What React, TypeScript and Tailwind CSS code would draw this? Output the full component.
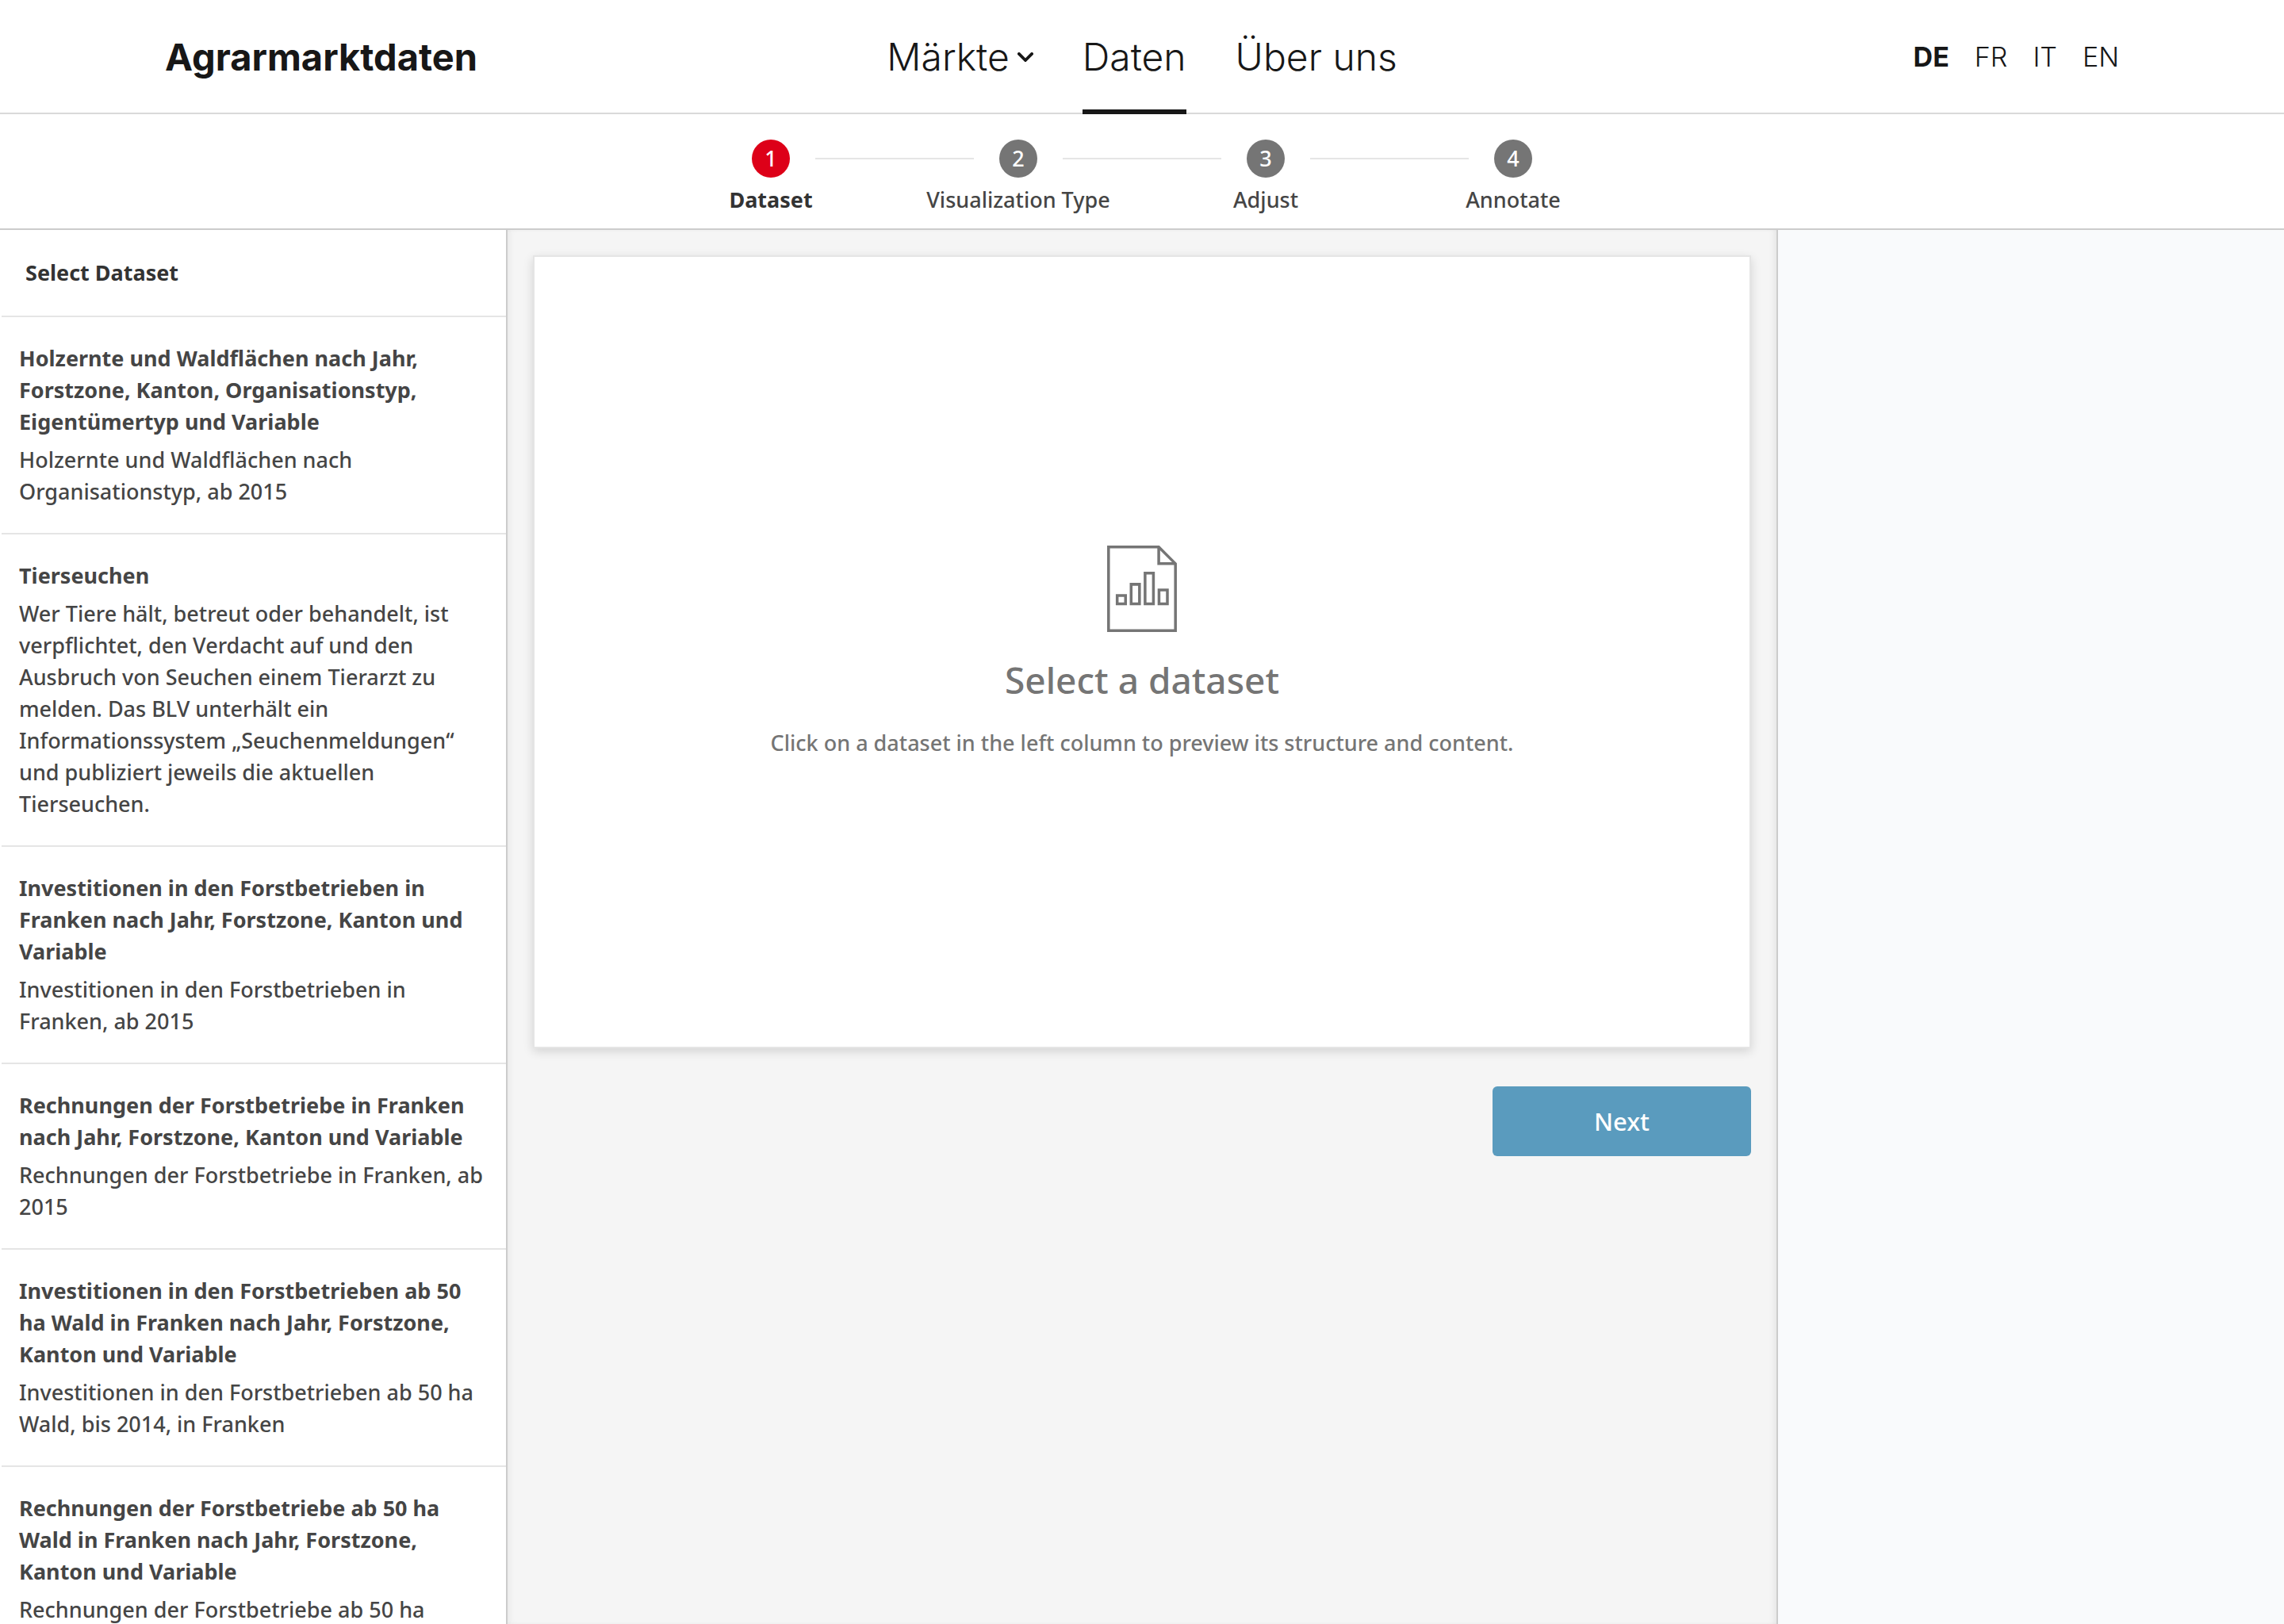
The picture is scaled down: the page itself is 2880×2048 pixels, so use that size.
type Dataset = { title: string; description: string };

const datasets: Dataset[] = [
  {
    title: "Holzernte und Waldflächen nach Jahr, Forstzone, Kanton, Organisationstyp, Eigentümertyp und Variable",
    description: "Holzernte und Waldflächen nach Organisationstyp, ab 2015",
  },
  {
    title: "Tierseuchen",
    description:
      "Wer Tiere hält, betreut oder behandelt, ist verpflichtet, den Verdacht auf und den Ausbruch von Seuchen einem Tierarzt zu melden. Das BLV unterhält ein Informationssystem „Seuchenmeldungen“ und publiziert jeweils die aktuellen Tierseuchen.",
  },
  {
    title: "Investitionen in den Forstbetrieben in Franken nach Jahr, Forstzone, Kanton und Variable",
    description: "Investitionen in den Forstbetrieben in Franken, ab 2015",
  },
  {
    title: "Rechnungen der Forstbetriebe in Franken nach Jahr, Forstzone, Kanton und Variable",
    description: "Rechnungen der Forstbetriebe in Franken, ab 2015",
  },
  {
    title: "Investitionen in den Forstbetrieben ab 50 ha Wald in Franken nach Jahr, Forstzone, Kanton und Variable",
    description: "Investitionen in den Forstbetrieben ab 50 ha Wald, bis 2014, in Franken",
  },
  {
    title: "Rechnungen der Forstbetriebe ab 50 ha Wald in Franken nach Jahr, Forstzone, Kanton und Variable",
    description: "Rechnungen der Forstbetriebe ab 50 ha",
  },
];

const steps = ["Dataset", "Visualization Type", "Adjust", "Annotate"];
const languages = ["DE", "FR", "IT", "EN"];

function ChevronIcon() {
  return (
    <svg viewBox="0 0 20 12" className="h-3 w-5" fill="none" stroke="currentColor" strokeWidth="3.8" aria-hidden="true">
      <path d="M1.9 1.9 10 10l8.100-8.100" strokeLinecap="round" strokeLinejoin="miter" />
    </svg>
  );
}

function ChartDocumentIcon() {
  return (
    <svg viewBox="0 0 25 31" className="h-[109px] w-[88px]" fill="none" stroke="currentColor" strokeWidth="1" aria-hidden="true">
      <path d="M.5.5h18l6 6v24H.5z" />
      <path d="M18.5.5v6h6" />
      <path d="M3.600 17.900h3v3h-3zM8.600 13.900h3v7h-3zM13.600 9.900h3v11h-3zM18.600 15.900h3v5h-3z" />
    </svg>
  );
}

function Header() {
  return (
    <header className="grid h-36 shrink-0 grid-cols-[1fr_auto_1fr] items-center px-52 font-['Inter',sans-serif] text-[#171717] shadow-[inset_0_-2px_0_#d9d9d9]">
      <a href="#home" className="text-[47px] font-bold">Agrarmarktdaten</a>
      <nav className="flex h-full items-stretch gap-[62px] text-5xl font-light" aria-label="Main">
        <button type="button" className="flex items-center gap-2.5">
          Märkte
          <ChevronIcon />
        </button>
        <a href="#daten" aria-current="page" className="flex items-center border-y-6 border-t-transparent border-b-[#171717]">Daten</a>
        <a href="#about" className="flex items-center">Über uns</a>
      </nav>
      <nav className="flex justify-end gap-8 text-[34px] font-light" aria-label="Language">
        {languages.map((l) => (
          <a key={l} href={`#${l}`} className="first:font-bold">{l}</a>
        ))}
      </nav>
    </header>
  );
}

function Stepper() {
  return (
    <div className="flex shrink-0 justify-center border-b-2 border-[#cccccc] pt-8 pb-4">
      <ol className="grid w-full max-w-[1248px] grid-cols-4">
        {steps.map((label, i) => (
          <li key={label} className="group text-center">
            <div className="flex items-center gap-8">
              <span className="h-0.5 flex-1 bg-[#e5e5e5] group-first:invisible" />
              <span className="flex size-12 items-center justify-center rounded-full bg-[#757575] text-white group-first:bg-[#dd0018]">{i + 1}</span>
              <span className="h-0.5 flex-1 bg-[#e5e5e5] group-last:invisible" />
            </div>
            <div className="mt-2 group-first:font-bold group-first:text-[#333333]">{label}</div>
          </li>
        ))}
      </ol>
    </div>
  );
}

export default function App() {
  return (
    <div className="flex h-screen flex-col overflow-hidden bg-white font-['Noto_Sans',sans-serif] text-[27px] leading-10 font-medium text-[#454545]">
      <Header />
      <Stepper />
      <div className="grid min-h-0 flex-1 grid-cols-[640px_1fr_640px]">
        <aside className="overflow-hidden border-r-2 border-[#cccccc] pl-0.5">
          <h2 className="border-b-2 border-[#e5e5e5] px-[30px] py-[34px] font-bold text-[#333333]">Select Dataset</h2>
          <ul>
            {datasets.map((d) => (
              <li key={d.title} className="border-b-2 border-[#e5e5e5]">
                <button type="button" className="block w-full px-[22px] py-8 text-left">
                  <span className="block font-bold">{d.title}</span>
                  <span className="mt-2 block">{d.description}</span>
                </button>
              </li>
            ))}
          </ul>
        </aside>
        <main className="bg-[#f5f5f5] p-8 shadow-[inset_6px_0_8px_-4px_rgba(0,0,0,0.06),inset_-6px_0_8px_-4px_rgba(0,0,0,0.08)]">
          <section className="flex min-h-[1000px] flex-col items-center justify-center gap-7 border-2 border-[#e5e5e5] bg-white text-[#757575] shadow-[0_4px_12px_rgba(0,0,0,0.14)]">
            <ChartDocumentIcon />
            <h1 className="text-[46px] leading-16">Select a dataset</h1>
            <p>Click on a dataset in the left column to preview its structure and content.</p>
          </section>
          <div className="mt-12 flex justify-end">
            <button type="button" className="h-[88px] w-[326px] rounded-md bg-[#5a9bbe] text-[31px] text-white">Next</button>
          </div>
        </main>
        <aside className="border-l-2 border-[#cccccc] bg-[#f9fafc]" />
      </div>
    </div>
  );
}
